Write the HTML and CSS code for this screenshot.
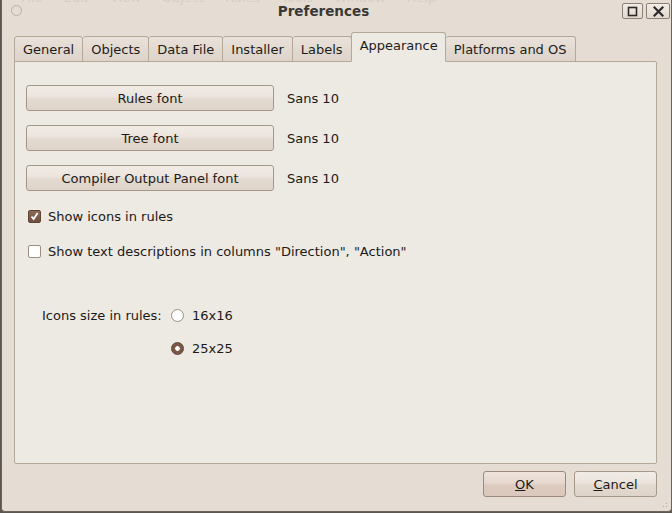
FILE: index.html
```html
<!DOCTYPE html>
<html>
<head>
<meta charset="utf-8">
<link rel="stylesheet" href="styles.css">
</head>
<body>
<div class="window">
  <div class="titlebar">
    <div class="ghost-menu"><span>File</span><span>Edit</span><span>View</span><span>Object</span><span>Rules</span><span>Tools</span><span>Window</span><span>Help</span></div>
    <span class="ghost-circle"></span>
    <div class="title">Preferences</div>
    <div class="wm-buttons">
      <span class="wm-btn"><svg width="11" height="11" viewBox="0 0 11 11"><rect x="1.5" y="1.5" width="8" height="8" fill="none" stroke="#2a2a2a" stroke-width="1.6"/></svg></span>
      <span class="wm-btn wm-close"><svg width="11" height="11" viewBox="0 0 11 11"><path d="M1.5 1.5 L9.5 9.5 M9.5 1.5 L1.5 9.5" stroke="#2a2a2a" stroke-width="2.2" stroke-linecap="square"/></svg></span>
    </div>
  </div>

  <div class="tabs">
    <div class="tab">General</div>
    <div class="tab">Objects</div>
    <div class="tab">Data File</div>
    <div class="tab">Installer</div>
    <div class="tab">Labels</div>
    <div class="tab active">Appearance</div>
    <div class="tab">Platforms and OS</div>
  </div>

  <div class="panel">
    <div class="font-row"><button class="btn font-btn">Rules font</button><span class="font-val">Sans 10</span></div>
    <div class="font-row"><button class="btn font-btn">Tree font</button><span class="font-val">Sans 10</span></div>
    <div class="font-row"><button class="btn font-btn">Compiler Output Panel font</button><span class="font-val">Sans 10</span></div>

    <div class="check-row first">
      <span class="check checked"><svg width="9" height="9" viewBox="0 0 9 9"><path d="M1.5 4.5 L3.6 7 L7.6 1" fill="none" stroke="#fff" stroke-width="1.8"/></svg></span>
      <span>Show icons in rules</span>
    </div>
    <div class="check-row">
      <span class="check"></span>
      <span>Show text descriptions in columns "Direction", "Action"</span>
    </div>

    <div class="radio-group">
      <div class="radio-row">
        <span class="radio-label">Icons size in rules:</span>
        <span class="radio"></span>
        <span>16x16</span>
      </div>
      <div class="radio-row second">
        <span class="radio selected"></span>
        <span>25x25</span>
      </div>
    </div>
  </div>

  <div class="footer">
    <button class="btn dlg-btn default"><u>O</u>K</button>
    <button class="btn dlg-btn"><u>C</u>ancel</button>
  </div>
  <span class="grip"></span>
</div>
</body>
</html>
```

FILE: styles.css
```css
html, body {
  margin: 0;
  padding: 0;
}
body {
  width: 672px;
  height: 513px;
  background: #5c5750;
  font-family: "DejaVu Sans", "Noto Sans", sans-serif;
  font-size: 13px;
  color: #1c1a18;
  overflow: hidden;
}
.window {
  position: relative;
  box-sizing: border-box;
  width: 671px;
  height: 512px;
  margin-left: 1px;
  border: 1px solid #6a645d;
  border-top: none;
  border-radius: 0 0 4px 4px;
  background: #e5ddd4;
  display: flex;
  flex-direction: column;
}
.titlebar {
  position: relative;
  height: 33px;
  flex: none;
}
.ghost-menu {
  position: absolute;
  left: 19px;
  top: -10px;
  display: flex;
  gap: 21px;
  color: #d6cec5;
  font-size: 13px;
}
.ghost-circle {
  position: absolute;
  left: 9px;
  top: 5px;
  width: 9px;
  height: 9px;
  border: 1px solid #b9b0a6;
  border-radius: 50%;
}
.title {
  position: relative;
  text-align: center;
  font-weight: bold;
  font-size: 13.5px;
  color: #3a3835;
  padding-top: 3px;
  line-height: 16px;
  padding-right: 26px;
}
.wm-buttons {
  position: absolute;
  right: 1px;
  top: 3px;
  display: flex;
  gap: 3px;
}
.wm-btn {
  box-sizing: border-box;
  width: 21px;
  height: 16px;
  border: 1px solid #8b8176;
  border-radius: 2px;
  background: linear-gradient(#f1ece6, #e2d9cf);
  display: flex;
  align-items: center;
  justify-content: center;
}
.wm-close { width: 24px; }

.tabs {
  display: flex;
  align-items: flex-end;
  padding-left: 12px;
  height: 29px;
  flex: none;
  position: relative;
  z-index: 1;
  margin-bottom: -1px;
}
.tab {
  box-sizing: border-box;
  height: 26px;
  padding: 1px 8px 0 8px;
  border: 1px solid #b5a899;
  border-left: none;
  border-radius: 3px 3px 0 0;
  background: linear-gradient(#e9e2da, #dcd3c9);
  display: flex;
  align-items: center;
  color: #1e1c1a;
}
.tab:first-child { border-left: 1px solid #b5a899; }
.tab.active {
  height: 30px;
  background: #ede9e3;
  border: 1px solid #b5a899;
  border-bottom: 1px solid #ede9e3;
  margin-left: -1px;
  padding: 0 7px 3px 8px;
}
.tab.active + .tab { border-left: none; }

.panel {
  box-sizing: border-box;
  margin: 0 14px 0 12px;
  height: 403px;
  border: 1px solid #b5a899;
  border-radius: 0 2px 2px 2px;
  background: #ede9e3;
  padding: 23px 0 0 11px;
  display: flex;
  flex-direction: column;
}
.btn {
  font-family: inherit;
  font-size: 13px;
  color: #1c1a18;
  box-sizing: border-box;
  height: 26px;
  border: 1px solid #a69889;
  border-radius: 3px;
  background: linear-gradient(#f1ece6 0%, #ebe4dd 45%, #e2d9cf 55%, #ded4ca 100%);
  padding: 0;
  margin: 0;
}
.font-row {
  display: flex;
  align-items: center;
  gap: 13px;
  margin-bottom: 14px;
}
.font-btn { width: 248px; }
.check-row {
  display: flex;
  align-items: center;
  gap: 7px;
  height: 18px;
  padding-left: 2px;
}
.check-row.first { margin-top: 2px; margin-bottom: 17px; }
.check {
  box-sizing: border-box;
  width: 13px;
  height: 13px;
  border: 1px solid #9c8d7e;
  border-radius: 2px;
  background: #fff;
  display: flex;
  align-items: center;
  justify-content: center;
}
.check.checked {
  background: linear-gradient(#8a6a58, #6f4f3e);
  border-color: #5e4232;
}
.radio-group {
  margin-top: 46px;
  padding-left: 16px;
}
.radio-row {
  display: flex;
  align-items: center;
  height: 18px;
}
.radio-label { width: 129px; }
.radio-row.second { margin-top: 15px; padding-left: 129px; }
.radio {
  box-sizing: border-box;
  width: 13px;
  height: 13px;
  border: 1px solid #9c8d7e;
  border-radius: 50%;
  background: #fff;
  margin-right: 8px;
}
.radio.selected {
  background: radial-gradient(circle, #fff 0 2px, #7a5947 2.6px);
  border-color: #5e4232;
}
.footer {
  display: flex;
  justify-content: flex-end;
  gap: 8px;
  padding: 7px 14px 0 0;
}
.dlg-btn { width: 83px; height: 26px; }
.dlg-btn.default {
  background: linear-gradient(#eee3dc 0%, #e6d8cf 45%, #ddcbc0 55%, #dac8bd 100%);
  border-color: #9c8b7d;
}
.grip {
  position: absolute;
  right: 2px;
  bottom: 2px;
  width: 10px;
  height: 10px;
  background-image: radial-gradient(circle, #b0a598 0.8px, transparent 1px);
  background-size: 3px 3px;
  clip-path: polygon(100% 0, 100% 100%, 0 100%);
}
```
